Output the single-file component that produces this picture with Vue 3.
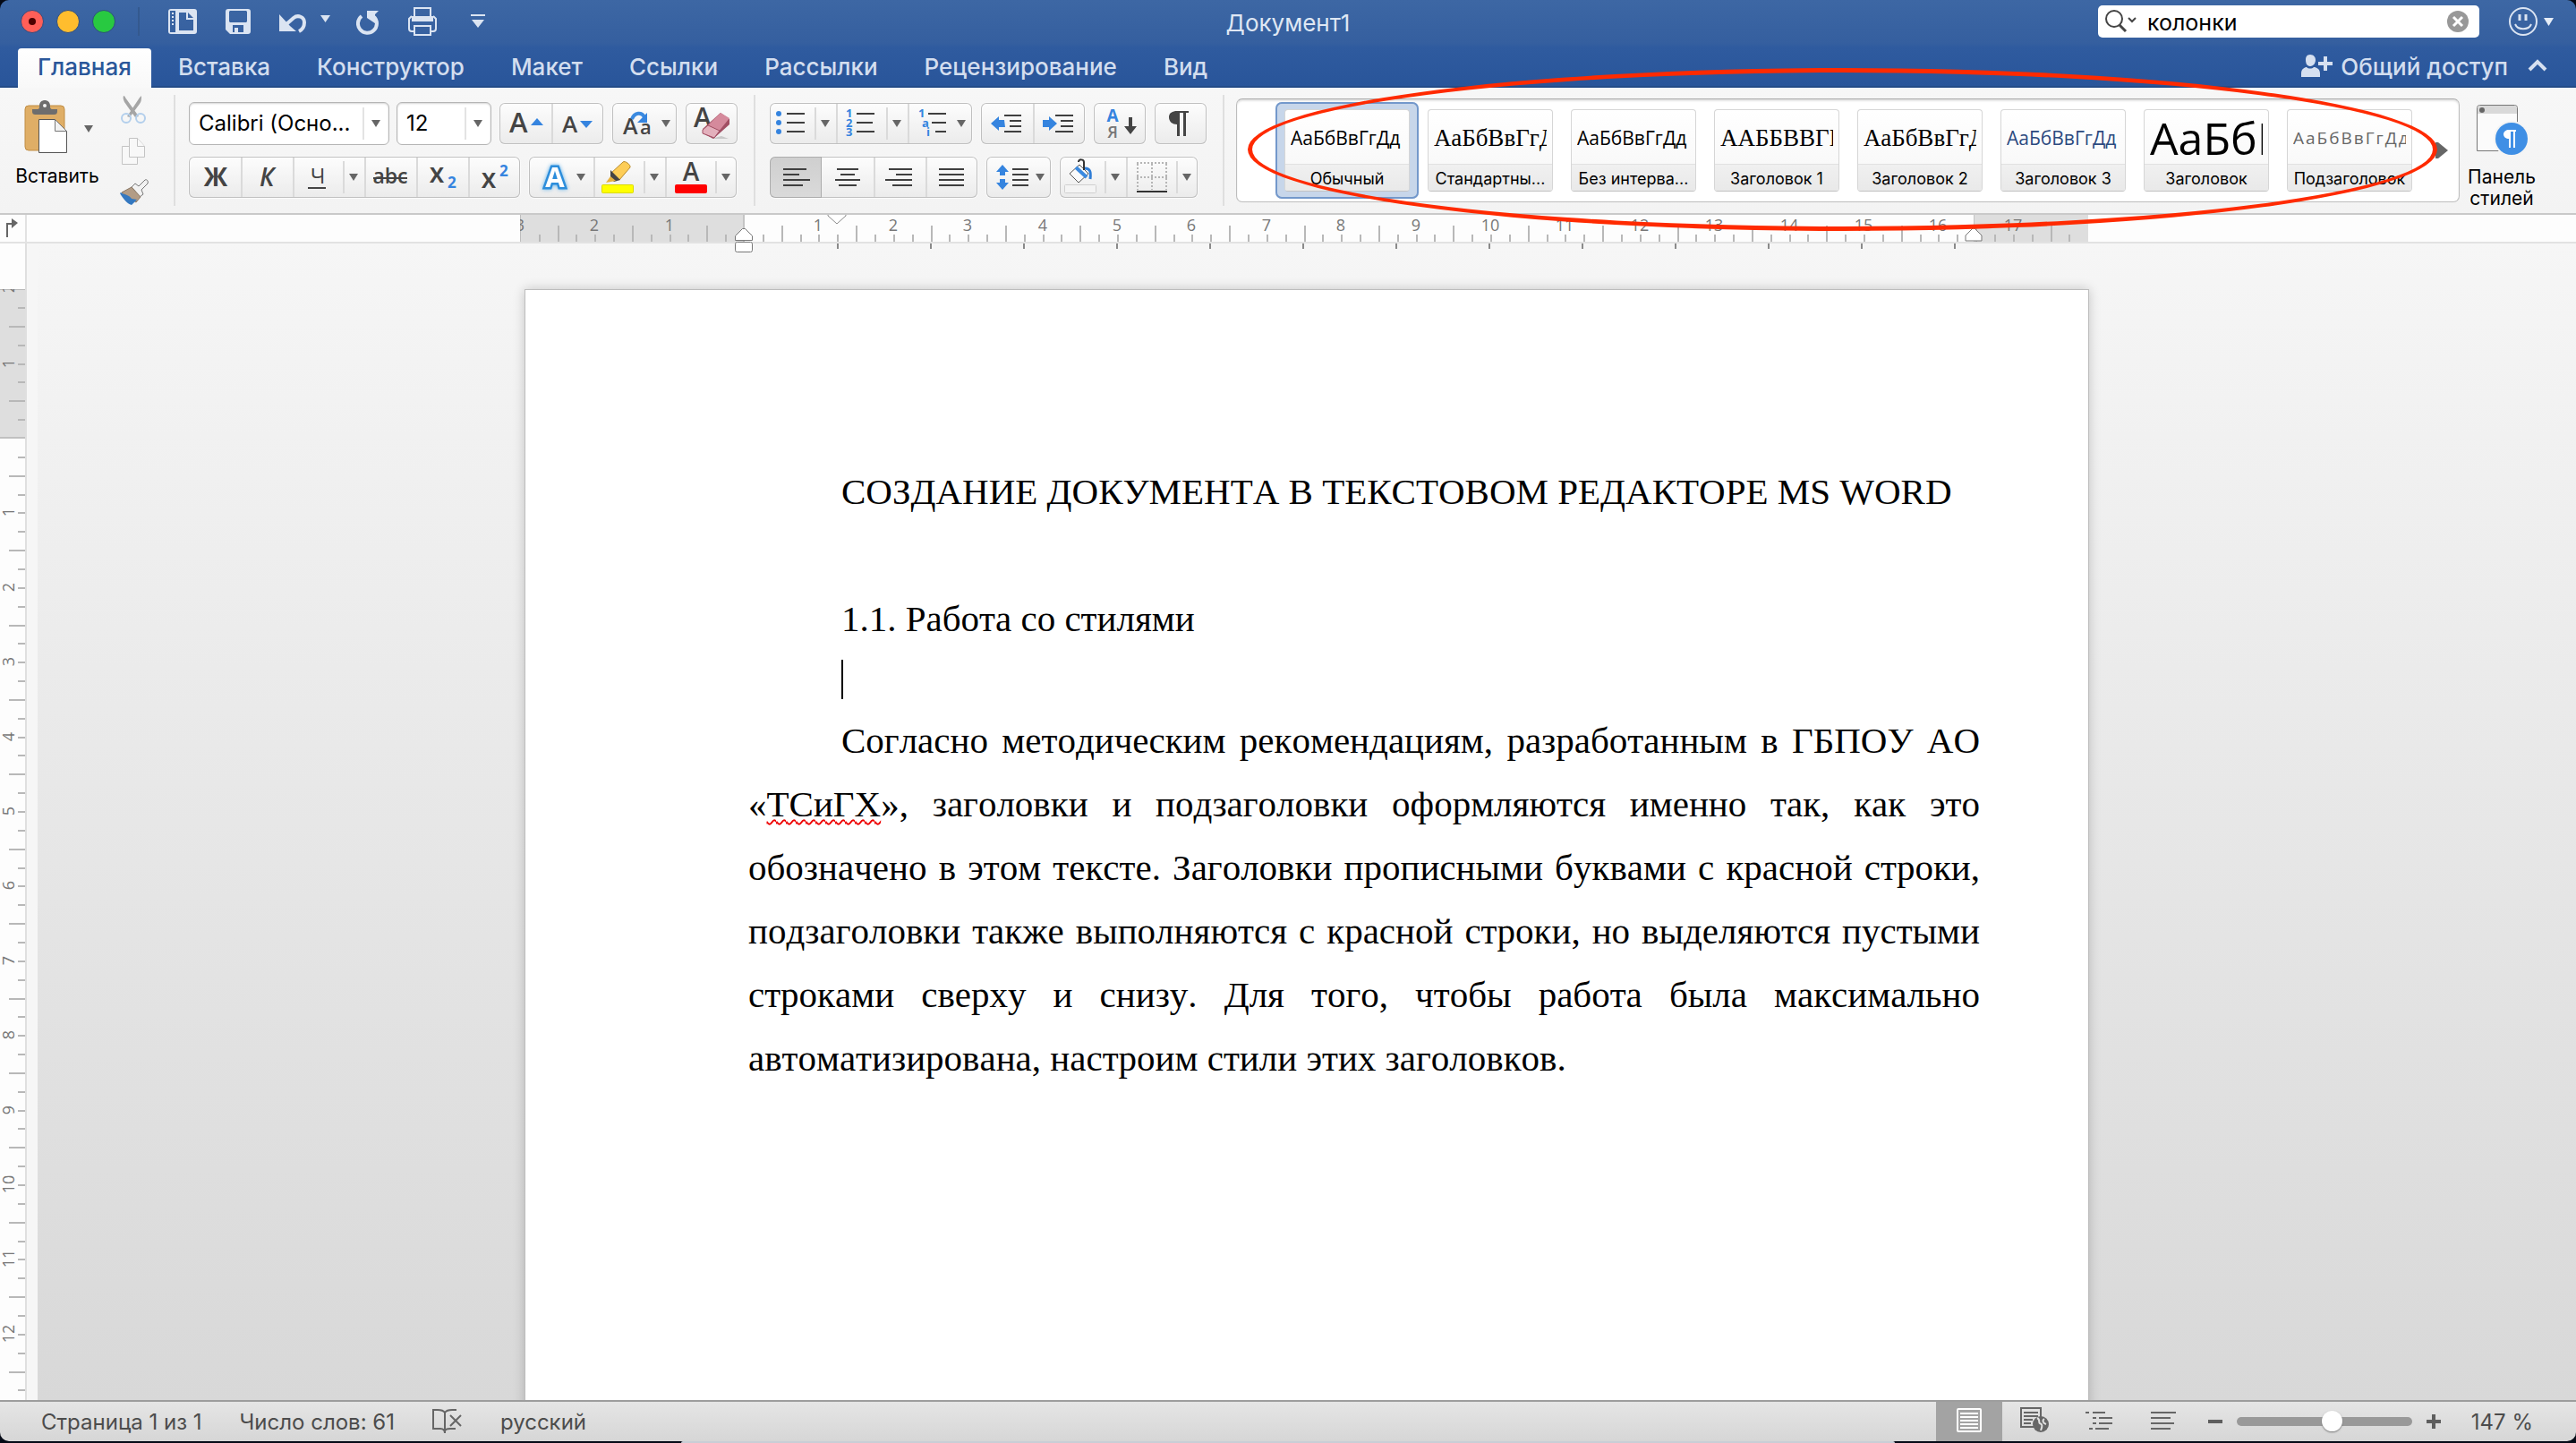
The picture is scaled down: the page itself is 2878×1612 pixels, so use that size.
<script setup>
import { ref } from 'vue'

const search = ref('колонки')
const zoom = ref(55)

const tabs = ['Главная', 'Вставка', 'Конструктор', 'Макет', 'Ссылки', 'Рассылки', 'Рецензирование', 'Вид']

const styles = [
  { name: 'Обычный', sample: 'АаБбВвГгДд', kind: 'calibri', selected: true },
  { name: 'Стандартны...', sample: 'АаБбВвГгДд', kind: 'times' },
  { name: 'Без интерва...', sample: 'АаБбВвГгДд', kind: 'calibri' },
  { name: 'Заголовок 1', sample: 'ААББВВГГ', kind: 'times' },
  { name: 'Заголовок 2', sample: 'АаБбВвГгДд', kind: 'times' },
  { name: 'Заголовок 3', sample: 'АаБбВвГгДд', kind: 'blue' },
  { name: 'Заголовок', sample: 'АаБбВв', kind: 'title' },
  { name: 'Подзаголовок', sample: 'АаБбВвГгДд', kind: 'subtitle' },
]

// one centimetre on either ruler, in pixels
const CM = 83.4
const hTicks = []
for (let q = -11; q < 72; q++) {
  if (q !== 0) hTicks.push({ x: Math.round(250 + (q * CM) / 4), tall: Math.abs(q) % 4 === 2 })
}
const hNumbers = []
for (let n = -3; n <= 17; n++) if (n !== 0) hNumbers.push({ x: Math.round(250 + n * CM), n: Math.abs(n) })
const tabStops = Array.from({ length: 13 }, (_, i) => 354 + i * 104)

const vTicks = []
for (let q = -8; q < 52; q++) if (q !== 0) vTicks.push({ y: Math.round(217 + (q * CM) / 4), tall: Math.abs(q) % 4 === 2 })
const vNumbers = []
for (let n = -2; n <= 12; n++) if (n !== 0) vNumbers.push({ y: Math.round(217 + n * CM), n: Math.abs(n) })
</script>

<template>
  <div class="window">
    <header class="head">
      <div class="titlebar">
        <div class="lights">
          <button class="light red" aria-label="Закрыть"></button>
          <button class="light amber" aria-label="Свернуть"></button>
          <button class="light green" aria-label="Развернуть"></button>
        </div>
        <div class="quick">
          <button aria-label="Шаблоны">
            <svg width="32" height="32" viewBox="0 0 32 32">
              <path fill="#dbe4f2" fill-rule="evenodd" d="M3 2h26a3 3 0 0 1 3 3v22a3 3 0 0 1-3 3H3a3 3 0 0 1-3-3V5a3 3 0 0 1 3-3zM2 4v24h6V4zM12 6v20h16V14h-8V6zM22 6v6h6z" />
              <path fill="#dbe4f2" d="M4 6h2v2H4zM4 10h2v2H4zM4 14h2v2H4zM4 18h2v2H4z" />
            </svg>
          </button>
          <button aria-label="Сохранить">
            <svg width="28" height="32" viewBox="0 0 28 32">
              <path fill="#dbe4f2" fill-rule="evenodd" d="M3 2h22a3 3 0 0 1 3 3v22a3 3 0 0 1-3 3H5l-5-5V5a3 3 0 0 1 3-3zM4 5v11l1 1h18l1-1V5l-1-1H5zM8 20v8h2v-5h4v5h6v-8z" />
            </svg>
          </button>
          <button class="undo" aria-label="Отменить">
            <svg width="58" height="32" viewBox="0 0 58 32">
              <path fill="#dbe4f2" d="M0 8v19h19l-7-6z" />
              <path fill="none" stroke="#dbe4f2" stroke-width="4" d="M8 19l8-7c5-4 12-1 12 5 0 5-2 8-6 10" />
              <path fill="#dbe4f2" d="M46 9h11l-5.500 8z" />
            </svg>
          </button>
          <button aria-label="Повторить">
            <svg width="26" height="32" viewBox="0 0 26 32">
              <path fill="none" stroke="#dbe4f2" stroke-width="4" d="M6 10a10.500 10.500 0 1 0 14 1" />
              <path fill="#dbe4f2" d="M12 4h13l-4 4v10l-9-6z" />
            </svg>
          </button>
          <button aria-label="Печать">
            <svg width="32" height="32" viewBox="0 0 32 32" fill="none" stroke="#dbe4f2" stroke-width="2">
              <path d="M7 11V1h18v10" />
              <path fill="#dbe4f2" d="M5 11h22v4H5z" />
              <path d="M6 27H4a3 3 0 0 1-3-3V13l3-3M26 27h2a3 3 0 0 0 3-3V13l-3-3M7 21h18v10H7z" />
            </svg>
          </button>
          <button class="more" aria-label="Настроить панель">
            <svg width="16" height="32" viewBox="0 0 16 32"><path fill="#dbe4f2" d="M0 8h16v2H0zM1 14h14l-7 9z" /></svg>
          </button>
        </div>
        <div class="doc-title">Документ1</div>
        <label class="search">
          <svg width="36" height="28" viewBox="0 0 36 28" fill="none" stroke="#444">
            <circle cx="11" cy="11" r="9" stroke-width="2" />
            <path stroke-width="3" d="M17 18l7 7" />
            <path stroke-width="2" d="M27 10l4 4 4-4" />
          </svg>
          <input v-model="search" type="text" aria-label="Поиск в документе" />
          <button class="clear" aria-label="Очистить">
            <svg width="24" height="24" viewBox="0 0 24 24"><circle cx="12" cy="12" r="12" fill="#989898" /><path stroke="#fff" stroke-width="3" d="M7 7l10 10M17 7L7 17" /></svg>
          </button>
        </label>
        <button class="smile" aria-label="Отзыв">
          <svg width="52" height="34" viewBox="0 0 52 34" fill="none" stroke="#dbe4f2">
            <circle cx="17" cy="17" r="15" stroke-width="2" />
            <path stroke-width="3" d="M13 9v7M20 9v7" />
            <path stroke-width="2" d="M8 20c3 7 15 7 18 0" />
            <path fill="#e6edf7" stroke="none" d="M40 13h11l-5.500 9z" />
          </svg>
        </button>
      </div>
      <nav class="tabs">
        <button v-for="(tab, i) in tabs" :key="tab" :class="['tab', { active: i === 0 }]">{{ tab }}</button>
        <button class="share">
          <svg width="36" height="26" viewBox="0 0 36 26" fill="#d6e0f0">
            <path d="M10 0c4 0 6 3 6 6s-2 7-6 7-5-4-5-7 1-6 5-6zM0 25v-4c0-5 4-7 6-7 2 2 6 2 8 0 3 0 7 2 7 7v4zM19 8h6V2h4v6h6v4h-6v6h-4v-6h-6z" />
          </svg>
          <span>Общий доступ</span>
        </button>
        <button class="collapse" aria-label="Свернуть ленту">
          <svg width="22" height="14" viewBox="0 0 22 14"><path fill="none" stroke="#d6e0f0" stroke-width="4" d="M2 12l9-9 9 9" /></svg>
        </button>
      </nav>
    </header>

    <div class="ribbon">
      <section class="clipboard">
        <button class="paste">
          <svg width="94" height="66" viewBox="17 110 94 66">
            <rect x="28" y="118" width="44" height="50" rx="4" fill="#dfae66" stroke="#c08d45" />
            <path fill="#6d6d6d" d="M36 122h6c2 0 2-2 2-4 0-8 12-8 12 0 0 2 0 4 3 4h5v2c0 3-1 4-4 4H40c-3 0-4-1-4-4z" />
            <circle cx="50" cy="118" r="2" fill="#f4f4f4" />
            <path fill="#fff" stroke="#555" d="M43.500 133.500h18l13 13v24h-31z" />
            <path fill="#f2f2f2" stroke="#777" d="M61.500 133.500v13h13z" />
            <path fill="#666" d="M94 140h10l-5 8z" />
          </svg>
          <span>Вставить</span>
        </button>
        <div class="clip-tools">
          <button aria-label="Вырезать">
            <svg width="32" height="34" viewBox="0 0 32 34">
              <path fill="#a5a5a5" d="M5 1c1 0 2 1 2 2l15 21-4 1L6 8c-1-2-2-5-1-7zM25 1c0 4 0 6-2 9L12 25l-3-1L23 3z" />
              <circle cx="8" cy="26" r="5" fill="none" stroke="#b3cfec" stroke-width="2" /><circle cx="24" cy="26" r="5" fill="none" stroke="#b3cfec" stroke-width="2" />
            </svg>
          </button>
          <button aria-label="Копировать">
            <svg width="32" height="34" viewBox="0 0 32 34" fill="#f8f8f8" stroke="#c3c3c3">
              <path d="M3.500 10.500h17v20h-17z" /><path d="M11.500 1.500h9l8 9v12h-17z" /><path d="M20.500 1.500v9h8" />
            </svg>
          </button>
          <button aria-label="Формат по образцу">
            <svg width="34" height="30" viewBox="0 0 34 30">
              <path fill="#f2f2f2" stroke="#777" d="M14 9l4-4 4 3 7-7c2-1 4 1 3 4l-7 7 2 5-4 3z" />
              <path fill="#b29c86" stroke="#8b7967" d="M14 9l10 11-5 6L3 15z" />
              <path fill="#3478c0" d="M2 15c4 3 9 2 12 7l6 1-6 6C9 28 4 21 1 16z" />
            </svg>
          </button>
        </div>
      </section>

      <section class="tools font-tools">
        <div class="row">
          <div class="combo wide"><select aria-label="Шрифт"><option>Calibri (Осно...</option></select><i></i></div>
          <div class="combo"><select aria-label="Размер шрифта"><option>12</option></select><i></i></div>
          <div class="group g-size">
            <button aria-label="Увеличить размер"><svg width="58" height="46" class="ink"><text x="11" y="33" font-size="31">A</text><path class="blue" d="M35 25l7-8 7 8z" /></svg></button>
            <button class="div" aria-label="Уменьшить размер"><svg width="58" height="46" class="ink"><text x="12" y="33" font-size="26">A</text><path class="blue" d="M32 20h14l-7 8z" /></svg></button>
          </div>
          <div class="group">
            <button aria-label="Регистр"><svg width="72" height="46" class="ink"><text x="12" y="35" font-size="25">A</text><text x="31" y="35" font-size="22">a</text><path d="M22 18c3-8 11-8 14-2" fill="none" stroke="#3b8ae0" stroke-width="4" /><path class="blue" d="M39 11v11H28z" /><path class="caret" d="M55 19h10l-5 8z" /></svg></button>
          </div>
          <div class="group">
            <button aria-label="Очистить формат">
              <svg width="58" height="46" class="ink"><text x="9" y="27" font-size="30">A</text><path d="M28 40h20l-8-3z" fill="#c9c9c9" /><path d="M39 11l10 7v6L31 40l-12-6v-5z" fill="#a14f63" /><path d="M39 11l10 6-17 21-13-7z" fill="#d58a9c" /><path d="M25 25l13 6-6 8-13-5v-4z" fill="#e3b0bc" stroke="#a14f63" /></svg>
            </button>
          </div>
        </div>
        <div class="row second">
          <div class="group">
            <button aria-label="Полужирный"><svg width="58" height="46" class="ink mid"><text x="30" y="33" font-size="28" font-weight="700">Ж</text></svg></button>
            <button class="div" aria-label="Курсив"><svg width="58" height="46" class="ink mid"><text x="29" y="33" font-size="28" font-style="italic">К</text></svg></button>
            <button class="div" aria-label="Подчеркнутый"><svg width="56" height="46" class="ink mid"><text x="28" y="30" font-size="24" font-weight="400">Ч</text><path d="M17 34h20v2H17z" /></svg></button>
            <button class="half" aria-label="Вид подчеркивания"><svg width="24" height="46"><path class="caret" d="M7 19h10l-5 8z" /></svg></button>
            <button class="div" aria-label="Зачеркнутый"><svg width="58" height="46" class="ink mid"><text x="29" y="30" font-size="23">abc</text><path d="M10 23h38v2H10z" /></svg></button>
            <button class="div" aria-label="Подстрочный"><svg width="58" height="46" class="ink"><text x="15" y="29" font-size="24" font-weight="700">X</text><text class="blue" x="35" y="35" font-size="17" font-weight="700">2</text></svg></button>
            <button class="div" aria-label="Надстрочный"><svg width="58" height="46" class="ink"><text x="15" y="35" font-size="24" font-weight="700">X</text><text class="blue" x="35" y="22" font-size="17" font-weight="700">2</text></svg></button>
          </div>
          <div class="group">
            <button aria-label="Текстовые эффекты"><svg width="72" height="46" class="ink mid"><text class="glow" x="29" y="34" font-size="31" font-weight="700">A</text><path class="caret" d="M53 19h10l-5 8z" /></svg></button>
            <button class="div" aria-label="Цвет выделения">
              <svg width="56" height="46"><path d="M19 19L33 6c2-2 9 3 8 6L29 26z" fill="#fdcd57" stroke="#b98b2c" /><path d="M19 15l11 11-7 2-4-4z" fill="#444" /><path d="M19 22l6 5-11 2z" fill="#e7b13e" /><rect x="9.500" y="31.500" width="35" height="9" rx="1" fill="#ff0" stroke="#d9d900" /></svg>
            </button>
            <button class="half" aria-label="Цвета выделения"><svg width="24" height="46"><path class="caret" d="M7 19h10l-5 8z" /></svg></button>
            <button class="div" aria-label="Цвет текста"><svg width="56" height="46" class="ink mid"><text x="29" y="27" font-size="28">A</text><rect x="11" y="31" width="36" height="10" rx="2" fill="#f00" /></svg></button>
            <button class="half" aria-label="Цвета текста"><svg width="24" height="46"><path class="caret" d="M7 19h10l-5 8z" /></svg></button>
          </div>
        </div>
      </section>

      <section class="tools para-tools">
        <div class="row">
          <div class="group">
            <button aria-label="Маркеры"><svg width="50" height="46" class="ink"><path class="ln" d="M19 12h20M19 22h20M19 32h20" /><g class="blue"><circle cx="10" cy="12" r="3" /><circle cx="10" cy="22" r="3" /><circle cx="10" cy="32" r="3" /></g></svg></button>
            <button class="half" aria-label="Виды маркеров"><svg width="24" height="46"><path class="caret" d="M7 19h10l-5 8z" /></svg></button>
            <button class="div" aria-label="Нумерация"><svg width="56" height="46" class="ink"><path class="ln" d="M23 12h20M23 22h18M23 32h20" /><g class="blue tiny"><text x="11" y="16">1</text><text x="11" y="27">2</text><text x="11" y="37">3</text></g></svg></button>
            <button class="half" aria-label="Виды нумерации"><svg width="24" height="46"><path class="caret" d="M7 19h10l-5 8z" /></svg></button>
            <button class="div" aria-label="Многоуровневый список"><svg width="72" height="46" class="ink"><path class="ln" d="M23 12h20M27 22h16M31 32h12" /><g class="blue tiny"><text x="12" y="16">1</text><text x="16" y="27">a</text><text x="21" y="37">i</text></g><path class="caret" d="M55 19h10l-5 8z" /></svg></button>
          </div>
          <div class="group">
            <button aria-label="Уменьшить отступ"><svg width="58" height="46" class="ink"><path class="ln" d="M26 14h19M32 20h13M32 26h13M26 32h19" /><path class="blue" d="M11 23l9-8v4h6l1 8h-7v4z" /></svg></button>
            <button class="div" aria-label="Увеличить отступ"><svg width="58" height="46" class="ink"><path class="ln" d="M25 14h20M31 20h14M31 26h14M25 32h20" /><path class="blue" d="M27 23l-9-8v4h-7v8h7v4z" /></svg></button>
          </div>
          <div class="group">
            <button aria-label="Сортировка"><svg width="58" height="46" class="ink mid"><text class="blue" x="21" y="21" font-size="19" font-weight="700">А</text><text x="21" y="39" font-size="18" fill="#777">Я</text><path d="M39 16h4v10h5l-7 9-7-9h5z" /></svg></button>
          </div>
          <div class="group">
            <button aria-label="Непечатаемые знаки"><svg width="58" height="46" class="ink"><path d="M38 9v2h-3v26h-3V11h-4v26h-3V24c-5 0-9-3-9-8s4-7 9-7z" /></svg></button>
          </div>
        </div>
        <div class="row second">
          <div class="group">
            <button class="pressed" aria-label="По левому краю"><svg width="58" height="46"><path class="ln" d="M15 14h26M15 20h18M15 26h30M15 32h22" /></svg></button>
            <button aria-label="По центру"><svg width="58" height="46"><path class="ln" d="M17 14h24M21 20h16M15 26h28M19 32h20" /></svg></button>
            <button class="div" aria-label="По правому краю"><svg width="58" height="46"><path class="ln" d="M17 14h26M25 20h18M13 26h30M21 32h22" /></svg></button>
            <button class="div" aria-label="По ширине"><svg width="58" height="46"><path class="ln" d="M15 14h28M15 20h28M15 26h28M15 32h28" /></svg></button>
          </div>
          <div class="group">
            <button aria-label="Интервалы"><svg width="72" height="46"><path class="ln" d="M29 14h18M29 20h18M29 26h18M29 32h18" /><path class="blue" d="M18 9l7 8h-4v4h-6v-4h-4zM18 37l7-8h-4v-4h-6v4h-4z" /><path class="caret" d="M55 19h10l-5 8z" /></svg></button>
          </div>
          <div class="group">
            <button aria-label="Заливка"><svg width="50" height="46"><path d="M22 9l10 10-11 10-10-10z" fill="#fafafa" stroke="#555" /><path d="M18 12l12 11" stroke="#3b8ae0" stroke-width="4" /><path d="M21 6c0-4 6-3 6 0v9" fill="none" stroke="#333" stroke-width="2" /><path d="M28 13c6 0 7 4 6 12" fill="none" stroke="#2f7dd6" stroke-width="3" /><rect x="5.500" y="31.500" width="35" height="9" rx="1" fill="#f4f4f4" stroke="#d0d0d0" /></svg></button>
            <button class="half" aria-label="Цвета заливки"><svg width="24" height="46"><path class="caret" d="M7 19h10l-5 8z" /></svg></button>
            <button class="div" aria-label="Границы"><svg width="56" height="46"><path d="M12 7h34M13 8v29M29 8v29M45 8v29M12 23h34" fill="none" stroke="#b5b5b5" stroke-width="2" stroke-dasharray="2 2" /><path d="M12 38h34v2H12z" fill="#333" /></svg></button>
            <button class="half" aria-label="Виды границ"><svg width="24" height="46"><path class="caret" d="M7 19h10l-5 8z" /></svg></button>
          </div>
        </div>
      </section>

      <section class="gallery">
        <button v-for="s in styles" :key="s.name" :class="['style', { selected: s.selected }]">
          <span class="card">
            <span class="sample"><span :class="s.kind">{{ s.sample }}</span></span>
            <span class="name">{{ s.name }}</span>
          </span>
        </button>
        <button class="next" aria-label="Другие стили"><svg width="14" height="18" viewBox="0 0 14 18"><path fill="#666" d="M0 0h3l11 9-11 9H0z" /></svg></button>
        <div class="mark"></div>
      </section>

      <button class="pane">
        <svg width="58" height="60" viewBox="0 0 58 60">
          <path fill="#fbfbfb" stroke="#777" d="M1.500 52.500v-48a3 3 0 0 1 3-3h39a3 3 0 0 1 3 3v48z" />
          <path fill="#d9d9d9" d="M2 11V5a3 3 0 0 1 3-3h38a3 3 0 0 1 3 3v6z" />
          <circle cx="7" cy="7" r="3" fill="#666" />
          <circle cx="40" cy="39" r="20" fill="#f4f4f4" />
          <circle cx="40" cy="39" r="18" fill="#3f8fe5" />
          <path fill="#fff" d="M45 29v2h-1v18h-2V31h-3v18h-2V39c-3 0-6-2-6-5s3-5 6-5z" />
        </svg>
        <span>Панель<br />стилей</span>
      </button>
    </div>

    <div class="hruler">
      <div class="corner"><svg width="20" height="22" viewBox="0 0 20 22"><path fill="none" stroke="#666" stroke-width="2" d="M1 21V6h8" /><path fill="#666" d="M6 0l7 5-7 6z" /></svg></div>
      <div class="track">
        <svg class="scale" width="1752" height="38">
          <svg width="1752" height="30">
            <rect width="250" height="30" fill="#dedede" />
            <rect x="1624" width="128" height="30" fill="#dedede" />
            <rect width="1" height="30" fill="#bdbdbd" /><rect x="249" width="2" height="30" fill="#c4c4c4" /><rect x="1624" width="1" height="30" fill="#c4c4c4" />
            <rect v-for="t in hTicks" :key="t.x" :x="t.x" :y="t.tall ? 12 : 22" width="2" :height="t.tall ? 18 : 8" fill="#b8b8b8" />
            <text v-for="t in hNumbers" :key="t.x" :x="t.x" y="18" class="num">{{ t.n }}</text>
            <path d="M344 -1v2l10 9 10-9v-2z" fill="#fff" stroke="#8a8a8a" />
            <path d="M1615 29v-6l8-8h2l8 8v6z" fill="#fff" stroke="#777" />
          </svg>
          <rect v-for="x in tabStops" :key="x" :x="x" y="32" width="2" height="6" fill="#8a8a8a" />
        </svg>
        <svg class="marker" width="20" height="27"><path d="M.5 13.500v-5l8-8h3l8 8v5z" fill="#fff" stroke="#777" /><rect x=".5" y="15.500" width="19" height="11" rx="2" fill="#fff" stroke="#777" /></svg>
      </div>
    </div>

    <div class="work">
      <div class="vruler">
        <svg width="28" height="1292">
          <svg y="51" width="28" height="1241">
            <rect width="28" height="166" fill="#dedede" /><rect width="28" height="1" fill="#b8b8b8" /><rect y="165" width="28" height="2" fill="#c0c0c0" />
            <g transform="translate(0 -51)">
              <rect v-for="t in vTicks" :key="t.y" :x="t.tall ? 10 : 20" :y="t.y" :width="t.tall ? 18 : 8" height="2" fill="#b8b8b8" />
              <text v-for="t in vNumbers" :key="t.y" class="num" :transform="`translate(16 ${t.y}) rotate(-90)`">{{ t.n }}</text>
            </g>
          </svg>
        </svg>
      </div>
      <main class="canvas">
        <article class="page">
          <h1>СОЗДАНИЕ ДОКУМЕНТА В ТЕКСТОВОМ РЕДАКТОРЕ MS WORD</h1>
          <h2>1.1. Работа со стилями</h2>
          <div class="blank"><span class="cursor"></span></div>
          <p>Согласно методическим рекомендациям, разработанным в ГБПОУ АО «<span class="typo">ТСиГХ</span>», заголовки и подзаголовки оформляются именно так, как это обозначено в этом тексте. Заголовки прописными буквами с красной строки, подзаголовки также выполняются с красной строки, но выделяются пустыми строками сверху и снизу. Для того, чтобы работа была максимально автоматизирована, настроим стили этих заголовков.</p>
        </article>
      </main>
    </div>

    <footer class="status">
      <button class="st pages">Страница 1 из 1</button>
      <button class="st words">Число слов: 61</button>
      <button class="st spell" aria-label="Правописание">
        <svg width="34" height="28" viewBox="0 0 34 28" fill="none" stroke="#666" stroke-width="2">
          <path d="M14 4c-2-3-5-3-8-3H1v21h8c3 0 5 1 5 5V4c2-3 5-3 8-3h5M14 25c0-3 3-3 6-3h6M20 7l12 12M32 7L20 19" />
        </svg>
      </button>
      <button class="st">русский</button>
      <div class="views">
        <button class="view on" aria-label="Разметка страницы"><svg width="28" height="28" viewBox="0 0 28 28" fill="none" stroke="#fff" stroke-width="2"><rect x="1" y="1" width="26" height="25" rx="1" /><path d="M4 6h20M4 10h20M4 14h20M4 18h20M4 22h20" /></svg></button>
        <button class="view" aria-label="Веб-документ"><svg width="34" height="30" viewBox="0 0 34 30" fill="none" stroke="#666" stroke-width="2"><path d="M16 22H2V1h22v10M5 6h16M5 10h16M5 14h10M5 18h8" /><circle cx="24" cy="19" r="9" fill="#666" stroke="none" /><path stroke="#e0e0e0" d="M20 12c4 2 1 5 3 6 3 1 3 3 1 8M28 13c-3 2-1 5 2 6" /></svg></button>
        <button class="view" aria-label="Структура"><svg width="30" height="22" viewBox="0 0 30 22" stroke="#666" stroke-width="2"><path d="M0 2h4M8 2h14M8 8h4M15 8h15M8 14h4M15 14h15M4 20h4M11 20h15" /></svg></button>
        <button class="view" aria-label="Черновик"><svg width="28" height="22" viewBox="0 0 28 22" stroke="#666" stroke-width="2"><path d="M0 2h28M0 8h22M0 14h26M0 20h22" /></svg></button>
      </div>
      <button class="step" aria-label="Уменьшить масштаб"><svg width="16" height="16"><path fill="#5e5e5e" d="M0 6h16v4H0z" /></svg></button>
      <input v-model="zoom" class="zoom" type="range" min="0" max="100" aria-label="Масштаб" />
      <button class="step" aria-label="Увеличить масштаб"><svg width="16" height="16"><path fill="#5e5e5e" d="M0 6h6V0h4v6h6v4h-6v6H6v-6H0z" /></svg></button>
      <button class="st percent">147 %</button>
    </footer>
    <div class="desk"><div class="dock"></div></div>
  </div>
</template>

<style>
body { margin: 0; background: #050a16; }
</style>

<style scoped>
* { box-sizing: border-box; }
button { margin: 0; padding: 0; border: 0; background: none; font: inherit; color: inherit; }
svg { display: block; }
.window { display: flex; flex-direction: column; height: 100vh; font-family: Inter, "Liberation Sans", sans-serif; color: #000; }

.head { flex: none; height: 98px; border-radius: 10px 10px 0 0; border-bottom: 2px solid #244c88; background: linear-gradient(#3d67a4, #355f9f 50%, #2f5b9f 55%, #29559a); }
.titlebar { position: relative; display: flex; align-items: center; height: 48px; padding-right: 24px; }
.lights { display: flex; gap: 14px; width: 156px; height: 32px; padding-left: 23px; align-items: center; border-right: 2px solid #34598f; }
.light { width: 26px; height: 26px; border-radius: 50%; border: 1px solid #2e4d80; background: #ff5f58; display: grid; place-items: center; }
.light.red::after { content: ""; width: 8px; height: 8px; border-radius: 50%; background: #4d0000; }
.light.amber { background: #ffbd2e; }
.light.green { background: #28c941; }
.quick { display: flex; gap: 32px; padding-left: 32px; }
.quick .undo { margin-right: -4px; }
.quick .more { margin-left: 6px; }
.doc-title { position: absolute; left: 0; right: 0; text-align: center; top: 10px; line-height: 32px; font-size: 26px; color: #dfe7f3; pointer-events: none; }
.search { display: flex; align-items: center; gap: 12px; width: 426px; height: 36px; margin-left: auto; padding: 0 12px 0 7px; border-radius: 5px; background: #fff; }
.search input { flex: 1; min-width: 0; height: 34px; padding: 2px 0 0; border: 0; outline: 0; background: none; font: 25px Inter, sans-serif; color: #000; }
.smile { margin-left: 32px; }

.tabs { display: flex; align-items: stretch; gap: 8px; height: 44px; margin-top: 6px; padding: 0 32px 0 20px; font-size: 26px; font-weight: 500; color: #d3deef; }
.tab { padding: 0 22px; line-height: 40px; padding-bottom: 2px; border-radius: 4px 4px 0 0; }
.tab.active { background: #fff linear-gradient(#fff, #f8f8f8); color: #2a579a; }
.share { display: flex; align-items: center; gap: 8px; margin-left: auto; padding-bottom: 4px; }
.collapse { margin-left: 14px; padding-bottom: 6px; }

.ribbon { position: relative; z-index: 2; flex: none; display: flex; height: 142px; border-bottom: 2px solid #c9c9c9; background: linear-gradient(#f7f7f7, #f3f3f3); }
.clipboard { display: flex; gap: 22px; width: 196px; height: 124px; margin-top: 8px; padding-left: 17px; border-right: 2px solid #dfdfdf; }
.paste { width: 94px; padding-top: 4px; font-size: 21px; display: flex; flex-direction: column; align-items: center; gap: 8px; align-self: flex-start; line-height: 26px; }
.clip-tools { display: flex; flex-direction: column; gap: 13px; }
.tools { height: 124px; margin-top: 8px; border-right: 2px solid #dfdfdf; }
.font-tools { padding: 0 18px 0 15px; }
.para-tools { padding: 0 18px 0 16px; }
.row { display: flex; align-items: center; gap: 10px; height: 48px; margin-top: 8px; }
.row.second { height: 46px; margin-top: 13px; }
.group { display: flex; height: 46px; border-radius: 6px; background: linear-gradient(#fdfdfd, #ebebeb); box-shadow: inset 0 0 0 1px #c0c0c0, 0 0 0 1px #fafafa; overflow: hidden; }
.group button { position: relative; }
.group .div::before, .group .half::before { content: ""; position: absolute; left: 0; top: 1px; bottom: 1px; width: 2px; background: #dadada; }
.group .half::before { top: 5px; bottom: 5px; }
.group .pressed { border-radius: 6px 0 0 6px; background: linear-gradient(#cfcfcf, #dadada); box-shadow: inset 0 0 0 1px #ababab; }
.combo { position: relative; width: 106px; height: 48px; margin-right: -1px; }
.combo.wide { width: 224px; margin-right: -2px; }
.combo select { width: 100%; height: 100%; padding: 0 32px 2px 10px; border: 1px solid #b5b5b5; border-radius: 6px; outline: 0; appearance: none; background: #fff; box-shadow: inset 0 1px 2px #d5d5d5; font: 24px Inter, sans-serif; color: #000; }
.combo i { position: absolute; right: 0; top: 6px; width: 30px; height: 36px; border-left: 2px solid #e3e3e3; pointer-events: none; }
.combo i::after { content: ""; position: absolute; left: 8px; top: 14px; border: 5px solid transparent; border-top: 8px solid #666; border-bottom: 0; }
.ink { fill: #444; font-family: "Open Sans", "Noto Sans", sans-serif; font-weight: 600; }
.mid { text-anchor: middle; }
.blue { fill: #3584df; }
.caret { fill: #666; }
.ln { fill: none; stroke: #3f3f3f; stroke-width: 2; }
.tiny { font-size: 13px; font-weight: 700; }
.glow { fill: #fff; stroke: #2c8ddb; stroke-width: 5; paint-order: stroke; filter: drop-shadow(0 0 2px #58aeea); }

.gallery { position: relative; flex: 1; min-width: 0; display: flex; align-items: center; height: 116px; margin: 12px 10px 0 13px; padding-left: 43px; border: 1px solid #bdbdbd; border-top-color: #a9a9a9; border-radius: 7px; background: #fff; box-shadow: inset 0 2px 2px #e4e4e4; }
.style { flex: none; width: 160px; height: 108px; padding: 8px 10px; border-radius: 7px; }
.style.selected { background: #c7d6ea; box-shadow: inset 0 0 0 2px #7398cb; }
.card { display: flex; flex-direction: column; height: 92px; border: 1px solid #d6d6d6; border-bottom-color: #c2c2c2; border-radius: 4px; background: linear-gradient(#fff, #f6f6f6); overflow: hidden; }
.sample { display: flex; align-items: center; height: 61px; margin: 0 6px; overflow: hidden; white-space: nowrap; line-height: 60px; padding-top: 2px; }
.name { height: 30px; border-top: 1px solid #e2e2e2; background: linear-gradient(#f0f0f0, #e9e9e9); font-size: 18px; line-height: 31px; text-align: center; white-space: nowrap; }
.calibri, .sample .blue, .title, .subtitle { font-family: "Open Sans", "Noto Sans", sans-serif; }
.calibri { font-size: 21px; }
.sample .blue { font-size: 21px; color: #2c4a80; }
.times { font-family: "Liberation Serif", serif; font-size: 27px; }
.title { font-size: 50px; }
.subtitle { font-size: 19px; letter-spacing: 2px; color: #666; }
.next { margin-left: 16px; }
.mark { position: absolute; z-index: 3; left: 12px; right: 24px; top: -35px; height: 182px; border: 5px solid #ff2a00; border-radius: 50%; pointer-events: none; }
.pane { display: flex; flex-direction: column; align-items: center; gap: 10px; width: 86px; margin: 18px 40px 0 -6px; font-size: 21px; line-height: 24px; align-self: flex-start; }

.hruler { position: relative; z-index: 1; flex: none; display: flex; height: 32px; border-bottom: 2px solid #e2e2e2; background: #fdfdfd; }
.corner { width: 30px; padding: 4px 0 0 7px; border-right: 2px solid #e2e2e2; }
.track { position: relative; flex: 1; display: flex; justify-content: center; padding-left: 6px; height: 30px; }
.scale { flex: none; overflow: visible; }
.marker { position: absolute; left: 50%; margin-left: -633px; top: 15px; }
.num { font: 18px "Open Sans", "Noto Sans", sans-serif; fill: #777; text-anchor: middle; }

.work { flex: 1; min-height: 0; display: flex; overflow: hidden; background: #f6f6f6; }
.vruler { width: 30px; margin-right: 12px; background: #fdfdfd; border-right: 2px solid #dfdfdf; overflow: hidden; }
.canvas { flex: 1; overflow: hidden; background: linear-gradient(#f6f6f6, #d8d8d8); }
.page { width: 1748px; min-height: 100%; margin: 51px auto 0; padding: 190px 121px 0 249px; border: 1px solid #bdbdbd; background: #fff; box-shadow: 0 0 12px rgba(0, 0, 0, .2); font: 41px/71px "Liberation Serif", serif; font-kerning: none; color: #000; }
.page h1 { margin: 0 0 71px; font: inherit; font-kerning: none; text-indent: 104px; white-space: nowrap; }
.page h2 { margin: 0; font: inherit; font-kerning: none; text-indent: 104px; }
.blank { height: 65px; padding: 10px 0 0 104px; }
.cursor { display: block; width: 2px; height: 44px; background: #000; }
.page p { margin: 0; text-indent: 104px; text-align: justify; }
.typo { text-decoration: underline wavy #e00 2px; text-underline-offset: 3px; text-decoration-skip-ink: none; }

.status { flex: none; display: flex; align-items: center; height: 46px; border-top: 2px solid #9d9d9d; border-radius: 0 0 10px 10px; background: linear-gradient(#e5e5e5, #d6d6d6); padding: 0 48px 0 46px; color: #4c4c4c; font-size: 24px; }
.pages { margin-right: 42px; }
.words { margin-right: 42px; }
.spell { margin-right: 42px; }
.views { display: flex; height: 44px; margin-left: auto; margin-right: 14px; }
.view { display: grid; place-items: center; width: 72px; padding-bottom: 2px; }
.view.on { width: 74px; background: #a3a3a3; }
.zoom { width: 196px; height: 24px; margin: 0 16px; appearance: none; background: none; }
.zoom::-webkit-slider-runnable-track { height: 10px; border-radius: 5px; background: #999; }
.zoom::-webkit-slider-thumb { appearance: none; width: 23px; height: 23px; margin-top: -7px; border-radius: 50%; background: #fff; box-shadow: 0 1px 2px #777; }
.percent { margin-left: 34px; white-space: nowrap; }
.desk { flex: none; height: 2px; }
.dock { width: 1356px; height: 2px; margin: 0 auto; border-radius: 4px 4px 0 0; background: #c9ced6; }
</style>
